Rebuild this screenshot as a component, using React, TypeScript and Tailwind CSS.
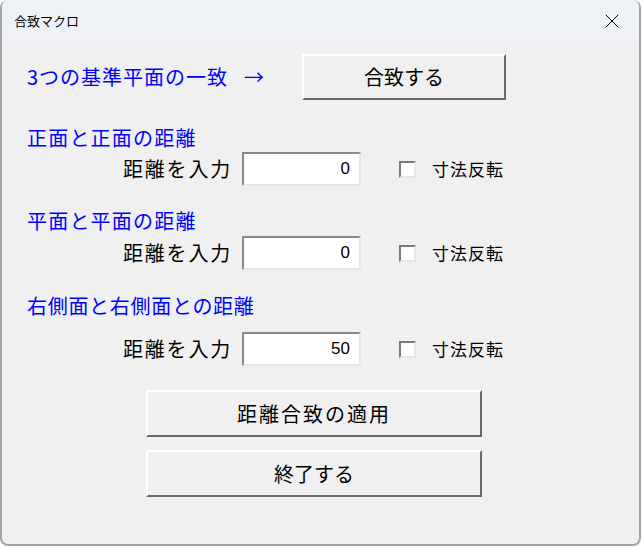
import { X } from 'lucide-react';

const jp = '[font-family:"Noto_Sans_CJK_JP","Noto_Sans",sans-serif]';

function RaisedButton({ label, className }: { label: string; className: string }) {
  return (
    <div
      className={`flex items-center justify-center bg-[#f0f0f0] border-2 border-t-white border-l-white border-r-[#696969] border-b-[#696969] text-[20px] text-black ${className}`}
    >
      {label}
    </div>
  );
}

function DistanceRow({ value, mt }: { value: string; mt: string }) {
  return (
    <div className={`flex items-center h-[34px] ${mt}`}>
      <div className="w-[230px] text-right text-[20px] text-black tracking-[1.8px]">距離を入力</div>
      <div className="ml-[10px] w-[119px] h-[34px] bg-white border-2 border-t-[#8a8a8a] border-l-[#8a8a8a] border-r-[#e6e6e6] border-b-[#e6e6e6] flex items-center justify-end pr-[9px] text-[17px] text-black [font-family:'Liberation_Sans',sans-serif]">
        {value}
      </div>
      <div className="ml-[38px] w-[17px] h-[17px] bg-white border-2 border-t-[#7a7a7a] border-l-[#7a7a7a] border-r-[#e6e6e6] border-b-[#e6e6e6]" />
      <div className="ml-[16px] text-[17px] tracking-[1px] text-black">寸法反転</div>
    </div>
  );
}

export default function App() {
  return (
    <div className={`w-[643px] h-[548px] bg-white overflow-hidden ${jp}`}>
      <div className="w-[641px] h-[546px] bg-[#f0f0f0] border-x-2 border-b-2 border-[#a3a3a3] rounded-t-[8px] rounded-b-[8px] overflow-hidden flex flex-col">
        {/* title bar */}
        <div className="h-[42px] bg-[#eef2f6] flex items-center justify-between pl-[12px] pr-[15px]">
          <span className="text-[13px] text-black">合致マクロ</span>
          <X size={24} strokeWidth={1} className="text-black" />
        </div>

        <div className="flex items-center h-[46px] mt-[12px]">
          <div className="pl-[25px] w-[300px] flex items-center text-[20px] text-[#0000ff]">
            <span className="tracking-[1px]">3つの基準平面の一致</span>
            <span className="ml-[16px]">→</span>
          </div>
          <RaisedButton label="合致する" className="w-[204px] h-[46px]" />
        </div>

        <div className="pl-[25px] mt-[26px] h-[24px] leading-[24px] text-[20px] tracking-[1.2px] text-[#0000ff]">正面と正面の距離</div>
        <DistanceRow value="0" mt="mt-[2px]" />

        <div className="pl-[25px] mt-[23px] h-[24px] leading-[24px] text-[20px] tracking-[1.2px] text-[#0000ff]">平面と平面の距離</div>
        <DistanceRow value="0" mt="mt-[3px]" />

        <div className="pl-[25px] mt-[24px] h-[24px] leading-[24px] text-[20px] tracking-[0.7px] text-[#0000ff]">右側面と右側面との距離</div>
        <DistanceRow value="50" mt="mt-[14px]" />

        <RaisedButton label="距離合致の適用" className="ml-[144px] w-[336px] h-[47px] mt-[24px] tracking-[2px]" />
        <RaisedButton label="終了する" className="ml-[144px] w-[336px] h-[47px] mt-[13px]" />
      </div>
    </div>
  );
}
